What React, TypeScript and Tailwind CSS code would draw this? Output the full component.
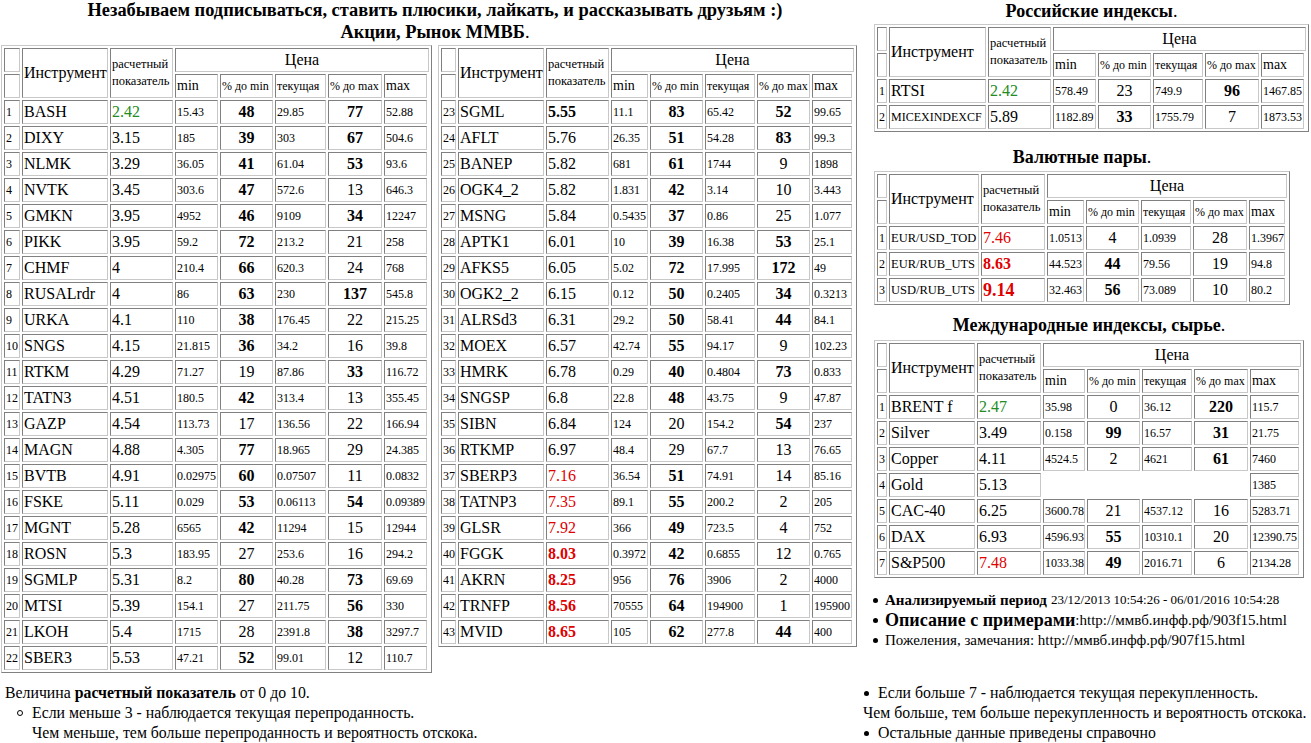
import React from "react";

type Row = string[];

const cellBorder =
  "border border-t-[#808080] border-l-[#808080] border-b-[#c8c8c8] border-r-[#c8c8c8] px-[1px]";

const leftRows: Row[] = [
  ["1", "BASH", "2.42", "15.43", "48", "29.85", "77", "52.88"],
  ["2", "DIXY", "3.15", "185", "39", "303", "67", "504.6"],
  ["3", "NLMK", "3.29", "36.05", "41", "61.04", "53", "93.6"],
  ["4", "NVTK", "3.45", "303.6", "47", "572.6", "13", "646.3"],
  ["5", "GMKN", "3.95", "4952", "46", "9109", "34", "12247"],
  ["6", "PIKK", "3.95", "59.2", "72", "213.2", "21", "258"],
  ["7", "CHMF", "4", "210.4", "66", "620.3", "24", "768"],
  ["8", "RUSALrdr", "4", "86", "63", "230", "137", "545.8"],
  ["9", "URKA", "4.1", "110", "38", "176.45", "22", "215.25"],
  ["10", "SNGS", "4.15", "21.815", "36", "34.2", "16", "39.8"],
  ["11", "RTKM", "4.29", "71.27", "19", "87.86", "33", "116.72"],
  ["12", "TATN3", "4.51", "180.5", "42", "313.4", "13", "355.45"],
  ["13", "GAZP", "4.54", "113.73", "17", "136.56", "22", "166.94"],
  ["14", "MAGN", "4.88", "4.305", "77", "18.965", "29", "24.385"],
  ["15", "BVTB", "4.91", "0.02975", "60", "0.07507", "11", "0.0832"],
  ["16", "FSKE", "5.11", "0.029", "53", "0.06113", "54", "0.09389"],
  ["17", "MGNT", "5.28", "6565", "42", "11294", "15", "12944"],
  ["18", "ROSN", "5.3", "183.95", "27", "253.6", "16", "294.2"],
  ["19", "SGMLP", "5.31", "8.2", "80", "40.28", "73", "69.69"],
  ["20", "MTSI", "5.39", "154.1", "27", "211.75", "56", "330"],
  ["21", "LKOH", "5.4", "1715", "28", "2391.8", "38", "3297.7"],
  ["22", "SBER3", "5.53", "47.21", "52", "99.01", "12", "110.7"],
];

const midRows: Row[] = [
  ["23", "SGML", "5.55", "11.1", "83", "65.42", "52", "99.65"],
  ["24", "AFLT", "5.76", "26.35", "51", "54.28", "83", "99.3"],
  ["25", "BANEP", "5.82", "681", "61", "1744", "9", "1898"],
  ["26", "OGK4_2", "5.82", "1.831", "42", "3.14", "10", "3.443"],
  ["27", "MSNG", "5.84", "0.5435", "37", "0.86", "25", "1.077"],
  ["28", "APTK1", "6.01", "10", "39", "16.38", "53", "25.1"],
  ["29", "AFKS5", "6.05", "5.02", "72", "17.995", "172", "49"],
  ["30", "OGK2_2", "6.15", "0.12", "50", "0.2405", "34", "0.3213"],
  ["31", "ALRSd3", "6.31", "29.2", "50", "58.41", "44", "84.1"],
  ["32", "MOEX", "6.57", "42.74", "55", "94.17", "9", "102.23"],
  ["33", "HMRK", "6.78", "0.29", "40", "0.4804", "73", "0.833"],
  ["34", "SNGSP", "6.8", "22.8", "48", "43.75", "9", "47.87"],
  ["35", "SIBN", "6.84", "124", "20", "154.2", "54", "237"],
  ["36", "RTKMP", "6.97", "48.4", "29", "67.7", "13", "76.65"],
  ["37", "SBERP3", "7.16", "36.54", "51", "74.91", "14", "85.16"],
  ["38", "TATNP3", "7.35", "89.1", "55", "200.2", "2", "205"],
  ["39", "GLSR", "7.92", "366", "49", "723.5", "4", "752"],
  ["40", "FGGK", "8.03", "0.3972", "42", "0.6855", "12", "0.765"],
  ["41", "AKRN", "8.25", "956", "76", "3906", "2", "4000"],
  ["42", "TRNFP", "8.56", "70555", "64", "194900", "1", "195900"],
  ["43", "MVID", "8.65", "105", "62", "277.8", "44", "400"],
];

const ruRows: Row[] = [
  ["1", "RTSI", "2.42", "578.49", "23", "749.9", "96", "1467.85"],
  ["2", "MICEXINDEXCF", "5.89", "1182.89", "33", "1755.79", "7", "1873.53"],
];

const fxRows: Row[] = [
  ["1", "EUR/USD_TOD", "7.46", "1.0513", "4", "1.0939", "28", "1.3967"],
  ["2", "EUR/RUB_UTS", "8.63", "44.523", "44", "79.56", "19", "94.8"],
  ["3", "USD/RUB_UTS", "9.14", "32.463", "56", "73.089", "10", "80.2"],
];

const worldRows: Row[] = [
  ["1", "BRENT f", "2.47", "35.98", "0", "36.12", "220", "115.7"],
  ["2", "Silver", "3.49", "0.158", "99", "16.57", "31", "21.75"],
  ["3", "Copper", "4.11", "4524.5", "2", "4621", "61", "7460"],
  ["4", "Gold", "5.13", "", "", "", "", "1385"],
  ["5", "CAC-40", "6.25", "3600.78", "21", "4537.12", "16", "5283.71"],
  ["6", "DAX", "6.93", "4596.93", "55", "10310.1", "20", "12390.75"],
  ["7", "S&P500", "7.48", "1033.38", "49", "2016.71", "6", "2134.28"],
];

function ratingClass(v: string) {
  const n = parseFloat(v);
  if (n < 3) return "text-[#228b22]";
  if (n >= 9) return "text-[#e00000] font-bold text-[18px]";
  if (n >= 8) return "text-[#e00000] font-bold";
  if (n >= 7) return "text-[#e00000]";
  if (v === "5.55") return "font-bold";
  return "";
}

const pctClass = (v: string) => (parseInt(v, 10) >= 30 ? "font-bold" : "");

function DataTable({
  rows,
  cols,
  width,
  nameSize = () => "text-[16px]",
}: {
  rows: Row[];
  cols: string[];
  width: string;
  nameSize?: (name: string) => string;
}) {
  return (
    <table
      className={`${width} table-fixed border-separate border-spacing-[2px] border border-t-[#c8c8c8] border-l-[#c8c8c8] border-b-[#808080] border-r-[#808080] leading-[18px]`}
    >
      <colgroup>
        {cols.map((c, i) => (
          <col key={i} className={c} />
        ))}
      </colgroup>
      <tbody>
        <tr>
          <td className={`${cellBorder} h-[24px]`} />
          <td rowSpan={2} className={`${cellBorder} text-[16px]`}>
            Инструмент
          </td>
          <td rowSpan={2} className={`${cellBorder} text-[12.5px] leading-[17px] whitespace-nowrap`}>
            расчетный
            <br />
            показатель
          </td>
          <td colSpan={6} className={`${cellBorder} h-[24px] text-center text-[16px]`}>
            Цена
          </td>
        </tr>
        <tr>
          <td className={`${cellBorder} h-[24px]`} />
          <td className={`${cellBorder} text-[14px]`}>min</td>
          <td className={`${cellBorder} text-[12px] whitespace-nowrap`}>% до min</td>
          <td className={`${cellBorder} text-[12px]`}>текущая</td>
          <td className={`${cellBorder} text-[12px] whitespace-nowrap`}>% до max</td>
          <td className={`${cellBorder} text-[14px]`}>max</td>
        </tr>
        {rows.map((r) => {
          const empty = r[3] === "";
          const blank = "border border-transparent";
          return (
            <tr key={r[0] + r[1]}>
              <td className={`${cellBorder} h-[24px] text-[12px]`}>{r[0]}</td>
              <td className={`${cellBorder} whitespace-nowrap ${nameSize(r[1])}`}>{r[1]}</td>
              <td className={`${cellBorder} text-[16px] ${ratingClass(r[2])}`}>{r[2]}</td>
              <td className={`${empty ? blank : cellBorder} text-[12px]`}>{r[3]}</td>
              <td className={`${empty ? blank : cellBorder} text-center text-[16px] ${pctClass(r[4])}`}>
                {r[4]}
              </td>
              <td className={`${empty ? blank : cellBorder} text-[12px]`}>{r[5]}</td>
              <td className={`${empty ? blank : cellBorder} text-center text-[16px] ${pctClass(r[6])}`}>
                {r[6]}
              </td>
              <td className={`${cellBorder} text-[12px] whitespace-nowrap`}>{r[7]}</td>
            </tr>
          );
        })}
      </tbody>
    </table>
  );
}

function Caption({ text, cls }: { text: string; cls: string }) {
  return (
    <div className={`${cls} text-center text-[18px] leading-[22px]`}>
      <span className="font-bold">{text}</span>.
    </div>
  );
}

function Dot({ cls }: { cls: string }) {
  return <span className={`inline-block h-[5px] w-[5px] rounded-full bg-black ${cls}`} />;
}

export default function App() {
  return (
    <div className="h-[743px] w-[1311px] overflow-hidden bg-white font-['Liberation_Serif',serif] text-black">
      <div className="flex items-start">
        <div className="w-[870px] shrink-0">
          <div className="text-center text-[18.4px] font-bold leading-[20px]">
            Незабываем подписываться, ставить плюсики, лайкать, и рассказывать друзьям :)
          </div>
          <div className="text-center text-[18.4px] leading-[24px]">
            <span className="font-bold">Акции, Рынок ММВБ</span>.
          </div>
          <div className="mt-[1px] flex items-start gap-[6px] pl-[1px]">
            <DataTable
              rows={leftRows}
              width="w-[429px]"
              cols={["w-[16px]", "w-[86px]", "w-[63px]", "w-[43px]", "w-[53px]", "w-[51px]", "w-[54px]", "w-[43px]"]}
            />
            <DataTable
              rows={midRows}
              width="w-[417px]"
              cols={["w-[15px]", "w-[86px]", "w-[63px]", "w-[37px]", "w-[53px]", "w-[50px]", "w-[53px]", "w-[40px]"]}
            />
          </div>
        </div>

        <div className="pl-[4px]">
          <div className="w-fit">
            <Caption text="Российские индексы" cls="h-[24px]" />
            <DataTable
              rows={ruRows}
              width="w-[433px]"
              cols={["w-[10px]", "w-[97px]", "w-[63px]", "w-[43px]", "w-[53px]", "w-[50px]", "w-[54px]", "w-[43px]"]}
              nameSize={(n) => (n === "RTSI" ? "text-[16px]" : "text-[12px]")}
            />
          </div>
          <div className="mt-[14px] w-fit">
            <Caption text="Валютные пары" cls="h-[25px]" />
            <DataTable
              rows={fxRows}
              width="w-[414px]"
              cols={["w-[10px]", "w-[90px]", "w-[64px]", "w-[37px]", "w-[53px]", "w-[50px]", "w-[54px]", "w-[36px]"]}
              nameSize={() => "text-[12.5px]"}
            />
          </div>
          <div className="mt-[9px] w-fit">
            <Caption text="Международные индексы, сырье" cls="h-[26px]" />
            <DataTable
              rows={worldRows}
              width="w-[428px]"
              cols={["w-[10px]", "w-[86px]", "w-[64px]", "w-[42px]", "w-[53px]", "w-[50px]", "w-[54px]", "w-[49px]"]}
            />
          </div>
          <div className="mt-[12px] flex flex-col leading-[20px]">
            <div className="flex items-center whitespace-nowrap">
              <Dot cls="ml-[-1px] mr-[7px]" />
              <span className="text-[15px] font-bold">Анализируемый период</span>
              <span className="ml-[4px] text-[13px]">23/12/2013 10:54:26 - 06/01/2016 10:54:28</span>
            </div>
            <div className="flex items-center whitespace-nowrap">
              <Dot cls="ml-[-1px] mr-[7px]" />
              <span className="text-[18px] font-bold">Описание с примерами</span>
              <span className="text-[15px]">:http://ммвб.инфф.рф/903f15.html</span>
            </div>
            <div className="flex items-center whitespace-nowrap">
              <Dot cls="ml-[-1px] mr-[7px]" />
              <span className="text-[15px]">Пожеления, замечания: http://ммвб.инфф.рф/907f15.html</span>
            </div>
          </div>
        </div>
      </div>

      <div className="mt-[10px] flex text-[15.8px] leading-[20px]">
        <div className="w-[863px] shrink-0">
          <div className="pl-[5px]">
            Величина <span className="font-bold">расчетный показатель</span> от 0 до 10.
          </div>
          <div className="flex items-center pl-[17px]">
            <span className="mr-[9px] inline-block h-[6px] w-[6px] rounded-full border border-black" />
            Если меньше 3 - наблюдается текущая перепроданность.
          </div>
          <div className="pl-[32px]">Чем меньше, тем больше перепроданность и вероятность отскока.</div>
        </div>
        <div className="whitespace-nowrap">
          <div className="flex items-center">
            <Dot cls="ml-[1px] mr-[9px]" />
            Если больше 7 - наблюдается текущая перекупленность.
          </div>
          <div>Чем больше, тем больше перекупленность и вероятность отскока.</div>
          <div className="flex items-center">
            <Dot cls="ml-[1px] mr-[9px]" />
            Остальные данные приведены справочно
          </div>
        </div>
      </div>
    </div>
  );
}
